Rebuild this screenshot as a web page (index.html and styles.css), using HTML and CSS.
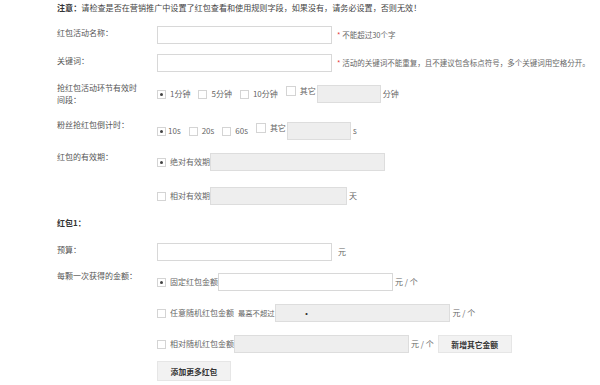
FILE: index.html
```html
<!DOCTYPE html>
<html lang="zh-CN">
<head>
    <meta charset="UTF-8">
    <title>红包设置</title>
    <link rel="stylesheet" href="styles.css">
</head>
<body>
    <p class="notice"><b>注意：</b>请检查是否在营销推广中设置了红包查看和使用规则字段，如果没有，请务必设置，否则无效！</p>

    <div class="row row-name">
        <div class="label">红包活动名称：</div>
        <div class="ctrl">
            <input type="text" class="txt">
            <span class="hint"><em>*</em> 不能超过30个字</span>
        </div>
    </div>

    <div class="row">
        <div class="label">关键词：</div>
        <div class="ctrl">
            <input type="text" class="txt">
            <span class="hint"><em>*</em> 活动的关键词不能重复，且不建议包含标点符号，多个关键词用空格分开。</span>
        </div>
    </div>

    <div class="row row-period">
        <div class="label">抢红包活动环节有效时<br>间段：</div>
        <div class="ctrl">
            <label class="opt"><span class="box on"></span>1分钟</label>
            <label class="opt"><span class="box"></span>5分钟</label>
            <label class="opt"><span class="box"></span>10分钟</label>
            <label class="opt other"><span class="box"></span>其它</label>
            <input type="text" class="txt off short">
            <span class="unit">分钟</span>
        </div>
    </div>

    <div class="row row-count">
        <div class="label">粉丝抢红包倒计时：</div>
        <div class="ctrl">
            <label class="opt tight"><span class="box on"></span>10s</label>
            <label class="opt"><span class="box"></span>20s</label>
            <label class="opt"><span class="box"></span>60s</label>
            <label class="opt other"><span class="box"></span>其它</label>
            <input type="text" class="txt off short">
            <span class="unit">s</span>
        </div>
    </div>

    <div class="row row-valid">
        <div class="label">红包的有效期：</div>
        <div class="ctrl">
            <label class="opt flush"><span class="box on"></span>绝对有效期</label>
            <input type="text" class="txt off">
        </div>
    </div>

    <div class="row row-valid2">
        <div class="label"></div>
        <div class="ctrl">
            <label class="opt flush"><span class="box"></span>相对有效期</label>
            <input type="text" class="txt off mid">
            <span class="unit">天</span>
        </div>
    </div>

    <div class="row row-title">
        <div class="label"><b>红包1：</b></div>
    </div>

    <div class="row row-budget">
        <div class="label">预算：</div>
        <div class="ctrl">
            <input type="text" class="txt">
            <span class="unit wide">元</span>
        </div>
    </div>

    <div class="row row-amount">
        <div class="label">每颗一次获得的金额：</div>
        <div class="ctrl">
            <label class="opt flush"><span class="box on"></span>固定红包金额</label>
            <input type="text" class="txt">
            <span class="unit">元 / 个</span>
        </div>
    </div>

    <div class="row">
        <div class="label"></div>
        <div class="ctrl">
            <label class="opt flush"><span class="box"></span>任意随机红包金额 <small>最高不超过</small></label>
            <input type="text" class="txt off dot" value="·">
            <span class="unit">元 / 个</span>
        </div>
    </div>

    <div class="row row-rel">
        <div class="label"></div>
        <div class="ctrl">
            <label class="opt flush"><span class="box"></span>相对随机红包金额</label>
            <input type="text" class="txt off">
            <span class="unit">元 / 个</span>
            <button type="button" class="btn">新增其它金额</button>
        </div>
    </div>

    <div class="row row-more">
        <div class="label"></div>
        <div class="ctrl">
            <button type="button" class="btn big">添加更多红包</button>
        </div>
    </div>
</body>
</html>
```

FILE: styles.css
```css
body {
    margin: 0;
    padding: 2px 0 0 57px;
    font-family: "Noto Sans CJK SC", sans-serif;
    font-size: 8px;
    color: #555;
    background: #fff;
}
.notice {
    margin: 0 0 9px;
    font-size: 8.1px;
    line-height: 12px;
    color: #444;
}
.notice b {
    color: #333;
}
.row {
    display: flex;
    align-items: flex-start;
    margin-bottom: 10px;
}
.label {
    width: 100px;
    flex: none;
    line-height: 12px;
    padding-top: 4px;
    color: #555;
}
.label b {
    color: #333;
}
.ctrl {
    display: flex;
    align-items: center;
    padding-top: 3px;
    line-height: 12px;
}
.txt {
    width: 175px;
    height: 18px;
    box-sizing: border-box;
    border: 1px solid #d8d8d8;
    padding: 0 4px;
    margin: 0;
    font: inherit;
    background: #fff;
    color: #333;
}
.txt.off {
    background: #eee;
    border-color: #ddd;
}
.txt.short {
    width: 64px;
}
.txt.mid {
    width: 137px;
}
.txt.dot {
    padding-left: 26px;
    font-weight: bold;
}
.hint {
    margin-left: 5px;
    font-size: 7.5px;
    color: #666;
}
.hint em {
    font-style: normal;
    color: #e4393c;
}
.unit {
    margin-left: 2px;
    color: #666;
}
.unit.wide {
    margin-left: 6px;
}
.opt {
    display: flex;
    align-items: center;
    gap: 4px;
    margin-right: 8px;
    color: #666;
}
.opt.tight {
    gap: 2px;
}
.opt.other {
    align-self: flex-start;
    margin-right: 1px;
}
.opt.other .box {
    width: 10px;
    height: 10px;
}
.opt.flush {
    margin-right: 0;
}
.opt small {
    font-size: 7.3px;
    margin-right: 1px;
}
.box {
    position: relative;
    width: 9px;
    height: 9px;
    box-sizing: border-box;
    border: 1px solid #d4d4d4;
    background: #fff;
    flex: none;
}
.box.on::after {
    content: "";
    position: absolute;
    left: 2px;
    top: 2px;
    width: 3px;
    height: 3px;
    border-radius: 50%;
    background: #444;
}
.btn {
    width: 74px;
    height: 18px;
    margin-left: 4px;
    padding: 0;
    border: 1px solid #e6e6e6;
    background: #f2f2f2;
    font-family: inherit;
    font-size: 7.8px;
    font-weight: bold;
    color: #333;
}
.btn.big {
    height: 20px;
    margin-left: 0;
}

/* per-row spacing */
.row-name {
    margin-bottom: 7px;
}
.row-period .label {
    padding-top: 0;
}
.row-count .label {
    padding-top: 3px;
}
.row-count .ctrl {
    padding-top: 6px;
}
.row-valid {
    margin-bottom: 13px;
}
.row-valid .label {
    padding-top: 1px;
}
.row-valid2 {
    margin-bottom: 12px;
}
.row-title {
    margin-bottom: 14px;
}
.row-title .label {
    padding-top: 0;
}
.row-budget {
    margin-bottom: 9px;
}
.row-budget .label {
    padding-top: 1px;
}
.row-budget .ctrl {
    padding-top: 0;
}
.row-amount .label {
    padding-top: 0;
}
.row-rel {
    margin-bottom: 8px;
}
.row-more .ctrl {
    padding-top: 0;
}
```
